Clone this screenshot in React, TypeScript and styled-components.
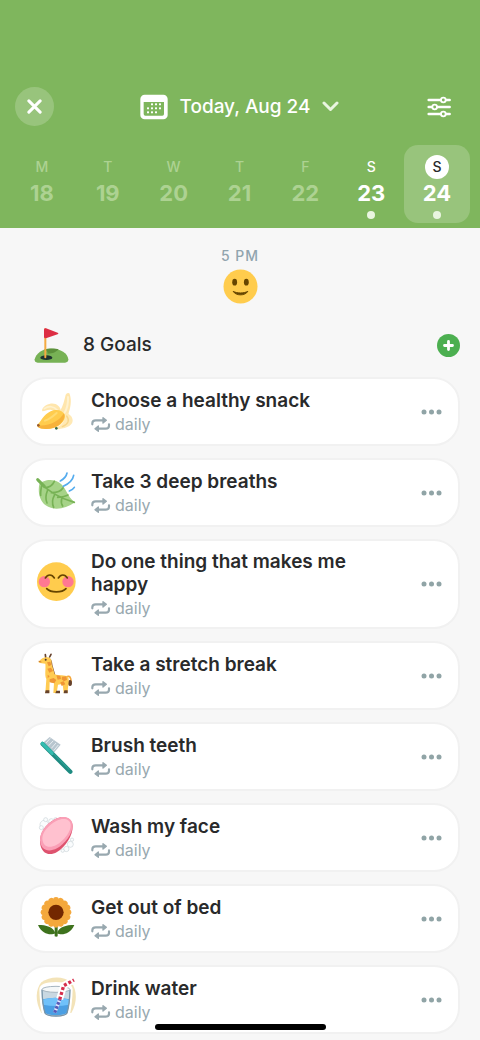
import React from "react";
import styled, { createGlobalStyle } from "styled-components";

const GlobalStyle = createGlobalStyle`
  * { box-sizing: border-box; }
  body {
    margin: 0;
    background: #f7f7f7;
    color: #292a2b;
    font-family: Inter, "Liberation Sans", sans-serif;
  }
  button { font: inherit; color: inherit; border: 0; padding: 0; background: none; cursor: pointer; }
  h1, h2, h3, p, ul { margin: 0; padding: 0; }
`;

const Page = styled.div`
  min-height: 100vh;
  overflow: hidden;
`;

const Header = styled.header`
  background: #7fb65d;
  color: #fff;
  padding: 87px 0 5px;
`;

const TopBar = styled.div`
  display: grid;
  grid-template-columns: 1fr auto 1fr;
  align-items: center;
  padding: 0 29px 0 15px;
`;

const CloseButton = styled.button`
  display: grid;
  place-items: center;
  width: 39px;
  height: 39px;
  border-radius: 50%;
  background: #98c47c;
`;

const DateButton = styled.button`
  display: flex;
  align-items: center;
  gap: 11px;
  font-size: 19px;
  font-weight: 500;
  line-height: 24px;
  white-space: nowrap;
  margin-left: 13px;
`;

const FilterButton = styled.button`
  display: grid;
  justify-self: end;
`;

const Week = styled.nav`
  display: grid;
  grid-template-columns: repeat(7, 1fr);
  padding: 0 10px 0 9px;
  margin-top: 19px;
`;

const DayButton = styled.button<{ $selected?: boolean; $dim?: boolean }>`
  display: flex;
  flex-direction: column;
  align-items: center;
  height: 78px;
  padding-top: 10px;
  border-radius: 14px;
  background: ${(p) => (p.$selected ? "#98c47c" : "transparent")};
  color: ${(p) => (p.$dim ? "#add292" : "#fff")};
`;

const DayLetter = styled.span<{ $selected?: boolean }>`
  width: 24px;
  height: 24px;
  border-radius: 50%;
  background: ${(p) => (p.$selected ? "#fff" : "transparent")};
  color: ${(p) => (p.$selected ? "#292a2b" : "inherit")};
  font-size: 14px;
  font-weight: 500;
  line-height: 24px;
`;

const DayNumber = styled.span`
  font-size: 22px;
  font-weight: 700;
  line-height: 28px;
`;

const DayDot = styled.span`
  width: 8px;
  height: 8px;
  margin-top: 4px;
  border-radius: 50%;
  background: #e9f5e0;
`;

const Mood = styled.section`
  display: flex;
  flex-direction: column;
  align-items: center;
  gap: 3px;
  padding-top: 18px;
`;

const MoodTime = styled.p`
  color: #90a4ae;
  font-size: 14px;
  font-weight: 500;
  line-height: 20px;
  letter-spacing: 1px;
`;

const GoalsHeader = styled.div`
  display: flex;
  align-items: center;
  height: 36px;
  margin-top: 23px;
  padding: 0 20px 0 34px;
`;

const GoalsTitle = styled.h2`
  flex: 1;
  margin-left: 14px;
  font-size: 19px;
  font-weight: 500;
  line-height: 24px;
`;

const AddButton = styled.button`
  display: grid;
  place-items: center;
  width: 23px;
  height: 23px;
  border-radius: 50%;
  background: #4caf50;
`;

const GoalList = styled.ul`
  display: flex;
  flex-direction: column;
  gap: 12px;
  padding: 14px 20px 0;
  list-style: none;
`;

const GoalCard = styled.li`
  display: flex;
  align-items: center;
  min-height: 69px;
  padding: 6px 16px 6px 14px;
  border: 2px solid #f1f1f1;
  border-radius: 26px;
  background: #fff;
`;

const GoalText = styled.div`
  flex: 1;
  padding: 3px 40px 0 15px;
`;

const GoalTitle = styled.h3`
  font-size: 19px;
  font-weight: 600;
  line-height: 23px;
`;

const Repeat = styled.p`
  display: flex;
  align-items: center;
  gap: 4px;
  color: #98a8af;
  font-size: 16px;
  font-weight: 400;
  line-height: 25px;
`;

const MoreButton = styled.button`
  display: grid;
`;

const HomeBar = styled.div`
  position: fixed;
  bottom: 10px;
  left: 50%;
  width: 171px;
  height: 6px;
  margin-left: -85px;
  border-radius: 3px;
  background: #000;
`;

const Art = styled.svg`
  display: block;
  flex: none;
  overflow: visible;
`;

const CloseIcon = () => (
  <svg width="15" height="15" viewBox="0 0 16 16" fill="none" stroke="#fff" strokeWidth="3.200" strokeLinecap="round" aria-hidden="true">
    <path d="M2 2l12 12M14 2L2 14" />
  </svg>
);

const CalendarIcon = () => (
  <svg width="28" height="26" viewBox="0 0 84 78" aria-hidden="true">
    <rect x="1" y="2" width="82" height="74" rx="13" fill="#fff" />
    <path d="M11 24h61v36q0 5-5 5H16q-5 0-5-5z" fill="#7fb65d" />
    <g fill="#fff">
      {[[34, 29], [46, 29], [58, 29], [22, 41], [34, 41], [46, 41], [58, 41], [22, 53], [34, 53], [46, 53]].map(([x, y]) => (
        <rect key={`${x}-${y}`} x={x - 1} y={y - 1} width="6" height="6" rx="1" />
      ))}
    </g>
  </svg>
);

const ChevronIcon = () => (
  <svg width="17" height="11" viewBox="0 0 17 11" fill="none" stroke="#e9f5e0" strokeWidth="3" strokeLinecap="round" strokeLinejoin="round" aria-hidden="true">
    <path d="M2 2l6.500 6.500L15 2" />
  </svg>
);

const FilterIcon = () => (
  <svg width="24" height="22" viewBox="0 0 72 66" fill="none" stroke="#fff" strokeWidth="7.500" strokeLinecap="round" aria-hidden="true">
    <path d="M5 12h63M5 33h63M5 54h63" />
    <g fill="#7fb65d" strokeWidth="5.500">
      <circle cx="49" cy="12" r="7" />
      <circle cx="23" cy="33" r="7" />
      <circle cx="49" cy="54" r="7" />
    </g>
  </svg>
);

const PlusIcon = () => (
  <svg width="11" height="11" viewBox="0 0 11 11" stroke="#fff" strokeWidth="2.800" strokeLinecap="round" aria-hidden="true">
    <path d="M5.500 1.500v8M1.500 5.500h8" />
  </svg>
);

const MoreIcon = () => (
  <svg width="21" height="6" viewBox="0 0 63 18" fill="#90a4a6" aria-hidden="true">
    <circle cx="9" cy="9" r="7.500" />
    <circle cx="31.500" cy="9" r="7.500" />
    <circle cx="54" cy="9" r="7.500" />
  </svg>
);

const RepeatIcon = () => (
  <svg width="20" height="17" viewBox="0 0 60 51" fill="none" stroke="#98a8af" strokeWidth="6.500" strokeLinecap="round" strokeLinejoin="round" aria-hidden="true">
    <path d="M4 25v-3q0-9 10-9h26M54 25v4q0 9-10 9H18" />
    <path d="M36 5l10 8-10 8zM22 30l-10 8 10 8z" fill="#98a8af" strokeWidth="4" />
  </svg>
);

const Smile = () => (
  <Art width="35" height="35" viewBox="0 0 36 36" role="img" aria-label="Happy">
    <circle cx="18" cy="18" r="17.500" fill="#ffcc4d" />
    <ellipse cx="12" cy="13.500" rx="2.500" ry="3.500" fill="#664500" />
    <ellipse cx="24" cy="13.500" rx="2.500" ry="3.500" fill="#664500" />
    <path d="M10.500 23c2.500 4.800 12.500 4.800 15 0-4 2.200-11 2.200-15 0z" fill="#664500" stroke="#664500" strokeLinejoin="round" />
  </Art>
);

const GolfFlag = () => (
  <Art width="35" height="35" viewBox="71 38 105 105" aria-hidden="true">
    <path d="M73 132c4-18 22-32 50-32s49 13 51 32q0 10-10 10H82q-10 0-9-10z" fill="#77b255" />
    <path d="M112 115c17 0 25-5 33-13-9-3-32-4-46 2 9 0 14 5 13 11z" fill="#5c913b" />
    <ellipse cx="108" cy="127" rx="18" ry="7" fill="#1d3430" />
    <path d="M105 42v84" stroke="#f4aa41" strokeWidth="6" strokeLinecap="round" />
    <path d="M101 43q0-5 6-4l35 13q5 2 0 5l-33 11q-8 2-8-4z" fill="#dd2e44" />
  </Art>
);

const Banana = () => (
  <Art width="40" height="40" viewBox="78 231 120 120" aria-hidden="true">
    <path d="M150 288c9-15 13-32 17-49q4-7 11-4c6 14 7 34-3 62l-11 12z" fill="#ffe6ad" />
    <path d="M174 246c1 18-2 33-10 47" fill="none" stroke="#fff2cf" strokeWidth="6" strokeLinecap="round" />
    <path d="M166 293c13 2 23 13 22 25-2 17-25 23-49 25l-3-6c18-4 27-13 30-44z" fill="#ffe9b5" />
    <path d="M170 303c10 13 5 24-13 32" fill="none" stroke="#f8d68a" strokeWidth="4" strokeLinecap="round" />
    <path d="M153 289c-2-17-17-27-35-22-15 4-24 14-21 22 10 0 18-8 29-3 8 3 13 9 16 13z" fill="#ffe6ad" />
    <path d="M103 281c13-9 29-8 39 5" fill="none" stroke="#fff2cf" strokeWidth="5" strokeLinecap="round" />
    <path d="M84 327c10-8 16-28 38-38 18-9 36-3 42 10 5 13-11 34-34 40-18 5-39 3-47-4z" fill="#ffcc4d" />
    <path d="M84 331c35 3 63-12 78-36 6 16-10 38-33 44-18 5-39 3-46-4z" fill="#f7b23b" />
    <path d="M105 317c12-4 24-13 35-23" fill="none" stroke="#ffdb72" strokeWidth="6" strokeLinecap="round" />
    <circle cx="85" cy="331" r="4" fill="#985a2c" />
    <circle cx="139" cy="340" r="4" fill="#356a4b" />
  </Art>
);

const Leaf = () => (
  <Art width="40" height="40" viewBox="78 54 120 120" aria-hidden="true">
    <path d="M88 88c10-13 39-18 58-6 24 14 24 44 49 60-29 20-63 27-88 9-18-14-24-39-19-63z" fill="#a6d388" />
    <path d="M83 75c17 20 49 50 110 67M105 98c15-1 23-8 28-19M124 113c18 0 30-6 35-14M143 127c14-1 24-3 31-7M96 87c-3 14-5 25-4 34M113 105c-7 17-7 28-2 39M133 121c-7 13-7 25-2 36M155 132c-2 8-1 15 3 21" fill="none" stroke="#77b255" strokeWidth="5" strokeLinecap="round" />
    <path d="M83 74l20 20" stroke="#77b255" strokeWidth="9" strokeLinecap="round" />
    <path d="M151 78c11-6 18-14 20-24M160 94c18-9 29-20 31-33M178 108c7-3 12-6 15-11" fill="none" stroke="#55acee" strokeWidth="5" strokeLinecap="round" />
  </Art>
);

const Blush = () => (
  <Art width="40" height="40" viewBox="78 75 120 120" aria-hidden="true">
    <circle cx="139" cy="128" r="58" fill="#ffcc4d" />
    <circle cx="103" cy="128" r="17" fill="#ff7892" />
    <circle cx="174" cy="128" r="17" fill="#ff7892" />
    <path d="M106 117c7-12 20-12 27 0M145 117c7-12 20-12 27 0" fill="none" stroke="#664500" strokeWidth="5" strokeLinecap="round" />
    <path d="M110 149c14 13 45 13 58 0-12 13-46 13-58 0z" fill="#664500" stroke="#664500" strokeWidth="5" strokeLinejoin="round" />
  </Art>
);

const Giraffe = () => (
  <Art width="40" height="40" viewBox="78 50 120 120" aria-hidden="true">
    <path d="M168 113c13-6 15 3 15 16" fill="none" stroke="#f4a83f" strokeWidth="5" />
    <ellipse cx="180" cy="131" rx="6" ry="9" fill="#66422c" />
    <path d="M107 54l-1-8M119 53l4-8" stroke="#66422c" strokeWidth="5" strokeLinecap="round" />
    <path d="M115 55c11 3 11 13 13 24l8 27-10 4-15-41z" fill="#825039" />
    <path d="M88 64c6-6 15-12 25-10 11 2 12 9 12 20l9 31c12 5 32 0 40 9 5 7 0 21-1 47h-12l-3-27-14 2-4 25h-10l2-29-13-5-1 34h-12l3-42c-6-13-1-29-3-46l-16-2q-7-2-2-7z" fill="#ffcb52" />
    <g fill="#ef9535">
      <path d="M111 69l10-2 3 10-8 4zM112 88l11-3 6 10-11 5zM119 120l12-4 8 6-6 10-14-3zM139 108l12 1 2 10-10 2zM156 112l13-1 2 10-9 5-7-6zM151 129l10-3 5 9-11 5zM113 106l6 5-6 6z" />
    </g>
    <path d="M107 153h11v9h-13zM139 154h11v8h-14zM163 153h10v9h-12z" fill="#66422c" />
    <circle cx="107" cy="61" r="3" fill="#4b3329" />
    <path d="M86 66l8 2" stroke="#cc7937" strokeWidth="3" />
  </Art>
);

const Toothbrush = () => (
  <Art width="40" height="40" viewBox="78 293 120 120" aria-hidden="true">
    <path d="M101 309l18-16 33 23-21 25z" fill="#b8c6cf" />
    <path d="M108 311l13-14M116 319l14-15M124 327l14-16M131 334l14-17" stroke="#e8eef1" strokeWidth="3" />
    <g strokeLinecap="round">
      <path d="M98 314l83 83" stroke="#1e8b81" strokeWidth="13" />
      <path d="M97 312l30 30" stroke="#35bcb0" strokeWidth="10" />
      <path d="M131 343l46 47" stroke="#2d9f94" strokeWidth="4" />
    </g>
  </Art>
);

const Soap = () => (
  <Art width="40" height="40" viewBox="78 54 120 120" aria-hidden="true">
    <g fill="#fafcfd" stroke="#cbd5da" strokeWidth="2">
      <circle cx="103" cy="74" r="13" />
      <circle cx="107" cy="59" r="6" />
      <circle cx="94" cy="83" r="6" />
      <circle cx="124" cy="64" r="8" />
      <circle cx="137" cy="59" r="6" />
      <circle cx="181" cy="133" r="9" />
      <circle cx="186" cy="119" r="5" />
      <circle cx="169" cy="147" r="8" />
      <circle cx="158" cy="152" r="5" />
    </g>
    <path d="M90 125c-1-23 14-52 46-68 24-12 51-4 52 21 1 29-22 64-47 78-24 14-49 4-51-31z" fill="#de536f" />
    <path d="M90 121c-1-23 16-49 47-65 25-11 49-4 51 18 1 26-24 58-47 71-25 13-49 7-51-24z" fill="#fa9fb6" />
    <path d="M97 116c0-20 18-40 43-54 20-10 41-5 42 12 2 21-22 49-42 60-22 12-41 7-43-18z" fill="#ffc1cf" />
  </Art>
);

const Sunflower = () => (
  <Art width="40" height="40" viewBox="78 296 120 120" aria-hidden="true">
    <path d="M134 369h9v39q-4 2-9 0z" fill="#3e721d" />
    <path d="M136 399c-12 6-39 5-52-25 25 0 46 5 52 25zM141 399c12 6 39 5 52-25-25 0-46 5-52 25z" fill="#3e721d" />
    <g fill="#f4a83c">
      {Array.from({ length: 16 }, (_, i) => (
        <ellipse key={i} cx="138" cy="300" rx="9" ry="10" transform={`rotate(${i * 22.5} 138 336)`} />
      ))}
      <circle cx="138" cy="336" r="38" />
    </g>
    <circle cx="138" cy="336" r="23" fill="#732700" />
  </Art>
);

const Water = () => (
  <Art width="40" height="40" viewBox="78 75 120 120" aria-hidden="true">
    <path d="M94 174c-20-35-17-71 0-92 26-19 66-20 90 0 18 24 18 61 0 92z" fill="#f3e3b8" />
    <path d="M88 102q2-21 50-21 47 0 50 21-1 43-8 75-7 14-42 14t-42-14q-7-28-8-75z" fill="#fff" />
    <path d="M95 104q43-16 86 0-1 40-8 70-6 11-35 11t-35-11q-7-26-8-70z" fill="#c9d8e2" />
    <path d="M97 133q41-9 82 0-1 21-7 39-6 9-34 9t-34-9q-6-17-7-39z" fill="#4b9fe3" />
    <path d="M97 134q41-12 82 0l-2 15q-39 8-78 0z" fill="#70c1fa" />
    <ellipse cx="138" cy="103" rx="42" ry="9" fill="#f4f7f8" stroke="#a6b5c0" strokeWidth="3" />
    <path d="M96 104q1 43 9 70 5 9 33 9t33-9q8-27 9-70" fill="none" stroke="#7894a9" strokeWidth="4" />
    <path d="M149 132l12-40 31-17" fill="none" stroke="#fff" strokeWidth="21" strokeLinejoin="round" />
    <path d="M134 173l15-39" stroke="#e5e8fc" strokeWidth="10" />
    <path d="M134 173l15-39" stroke="#5559b7" strokeWidth="10" strokeDasharray="8 5" />
    <path d="M149 134l12-42 31-17" fill="none" stroke="#d62f4d" strokeWidth="10" strokeDasharray="9 6" />
  </Art>
);

const days = [
  { letter: "M", number: 18, dim: true },
  { letter: "T", number: 19, dim: true },
  { letter: "W", number: 20, dim: true },
  { letter: "T", number: 21, dim: true },
  { letter: "F", number: 22, dim: true },
  { letter: "S", number: 23, dot: true },
  { letter: "S", number: 24, dot: true, selected: true },
];

const goals = [
  { title: "Choose a healthy snack", Picture: Banana },
  { title: "Take 3 deep breaths", Picture: Leaf },
  { title: "Do one thing that makes me happy", Picture: Blush },
  { title: "Take a stretch break", Picture: Giraffe },
  { title: "Brush teeth", Picture: Toothbrush },
  { title: "Wash my face", Picture: Soap },
  { title: "Get out of bed", Picture: Sunflower },
  { title: "Drink water", Picture: Water },
];

export default function App() {
  return (
    <Page>
      <GlobalStyle />
      <Header>
        <TopBar>
          <CloseButton aria-label="Close"><CloseIcon /></CloseButton>
          <DateButton>
            <CalendarIcon />
            Today, Aug 24
            <ChevronIcon />
          </DateButton>
          <FilterButton aria-label="Filters"><FilterIcon /></FilterButton>
        </TopBar>
        <Week aria-label="Week">
          {days.map((day) => (
            <DayButton key={day.number} $dim={day.dim} $selected={day.selected} aria-pressed={!!day.selected}>
              <DayLetter $selected={day.selected}>{day.letter}</DayLetter>
              <DayNumber>{day.number}</DayNumber>
              {day.dot && <DayDot />}
            </DayButton>
          ))}
        </Week>
      </Header>
      <main>
        <Mood>
          <MoodTime>5 PM</MoodTime>
          <Smile />
        </Mood>
        <GoalsHeader>
          <GolfFlag />
          <GoalsTitle>8 Goals</GoalsTitle>
          <AddButton aria-label="Add goal"><PlusIcon /></AddButton>
        </GoalsHeader>
        <GoalList>
          {goals.map(({ title, Picture }) => (
            <GoalCard key={title}>
              <Picture />
              <GoalText>
                <GoalTitle>{title}</GoalTitle>
                <Repeat><RepeatIcon />daily</Repeat>
              </GoalText>
              <MoreButton aria-label={`Options for ${title}`}><MoreIcon /></MoreButton>
            </GoalCard>
          ))}
        </GoalList>
      </main>
      <HomeBar />
    </Page>
  );
}
